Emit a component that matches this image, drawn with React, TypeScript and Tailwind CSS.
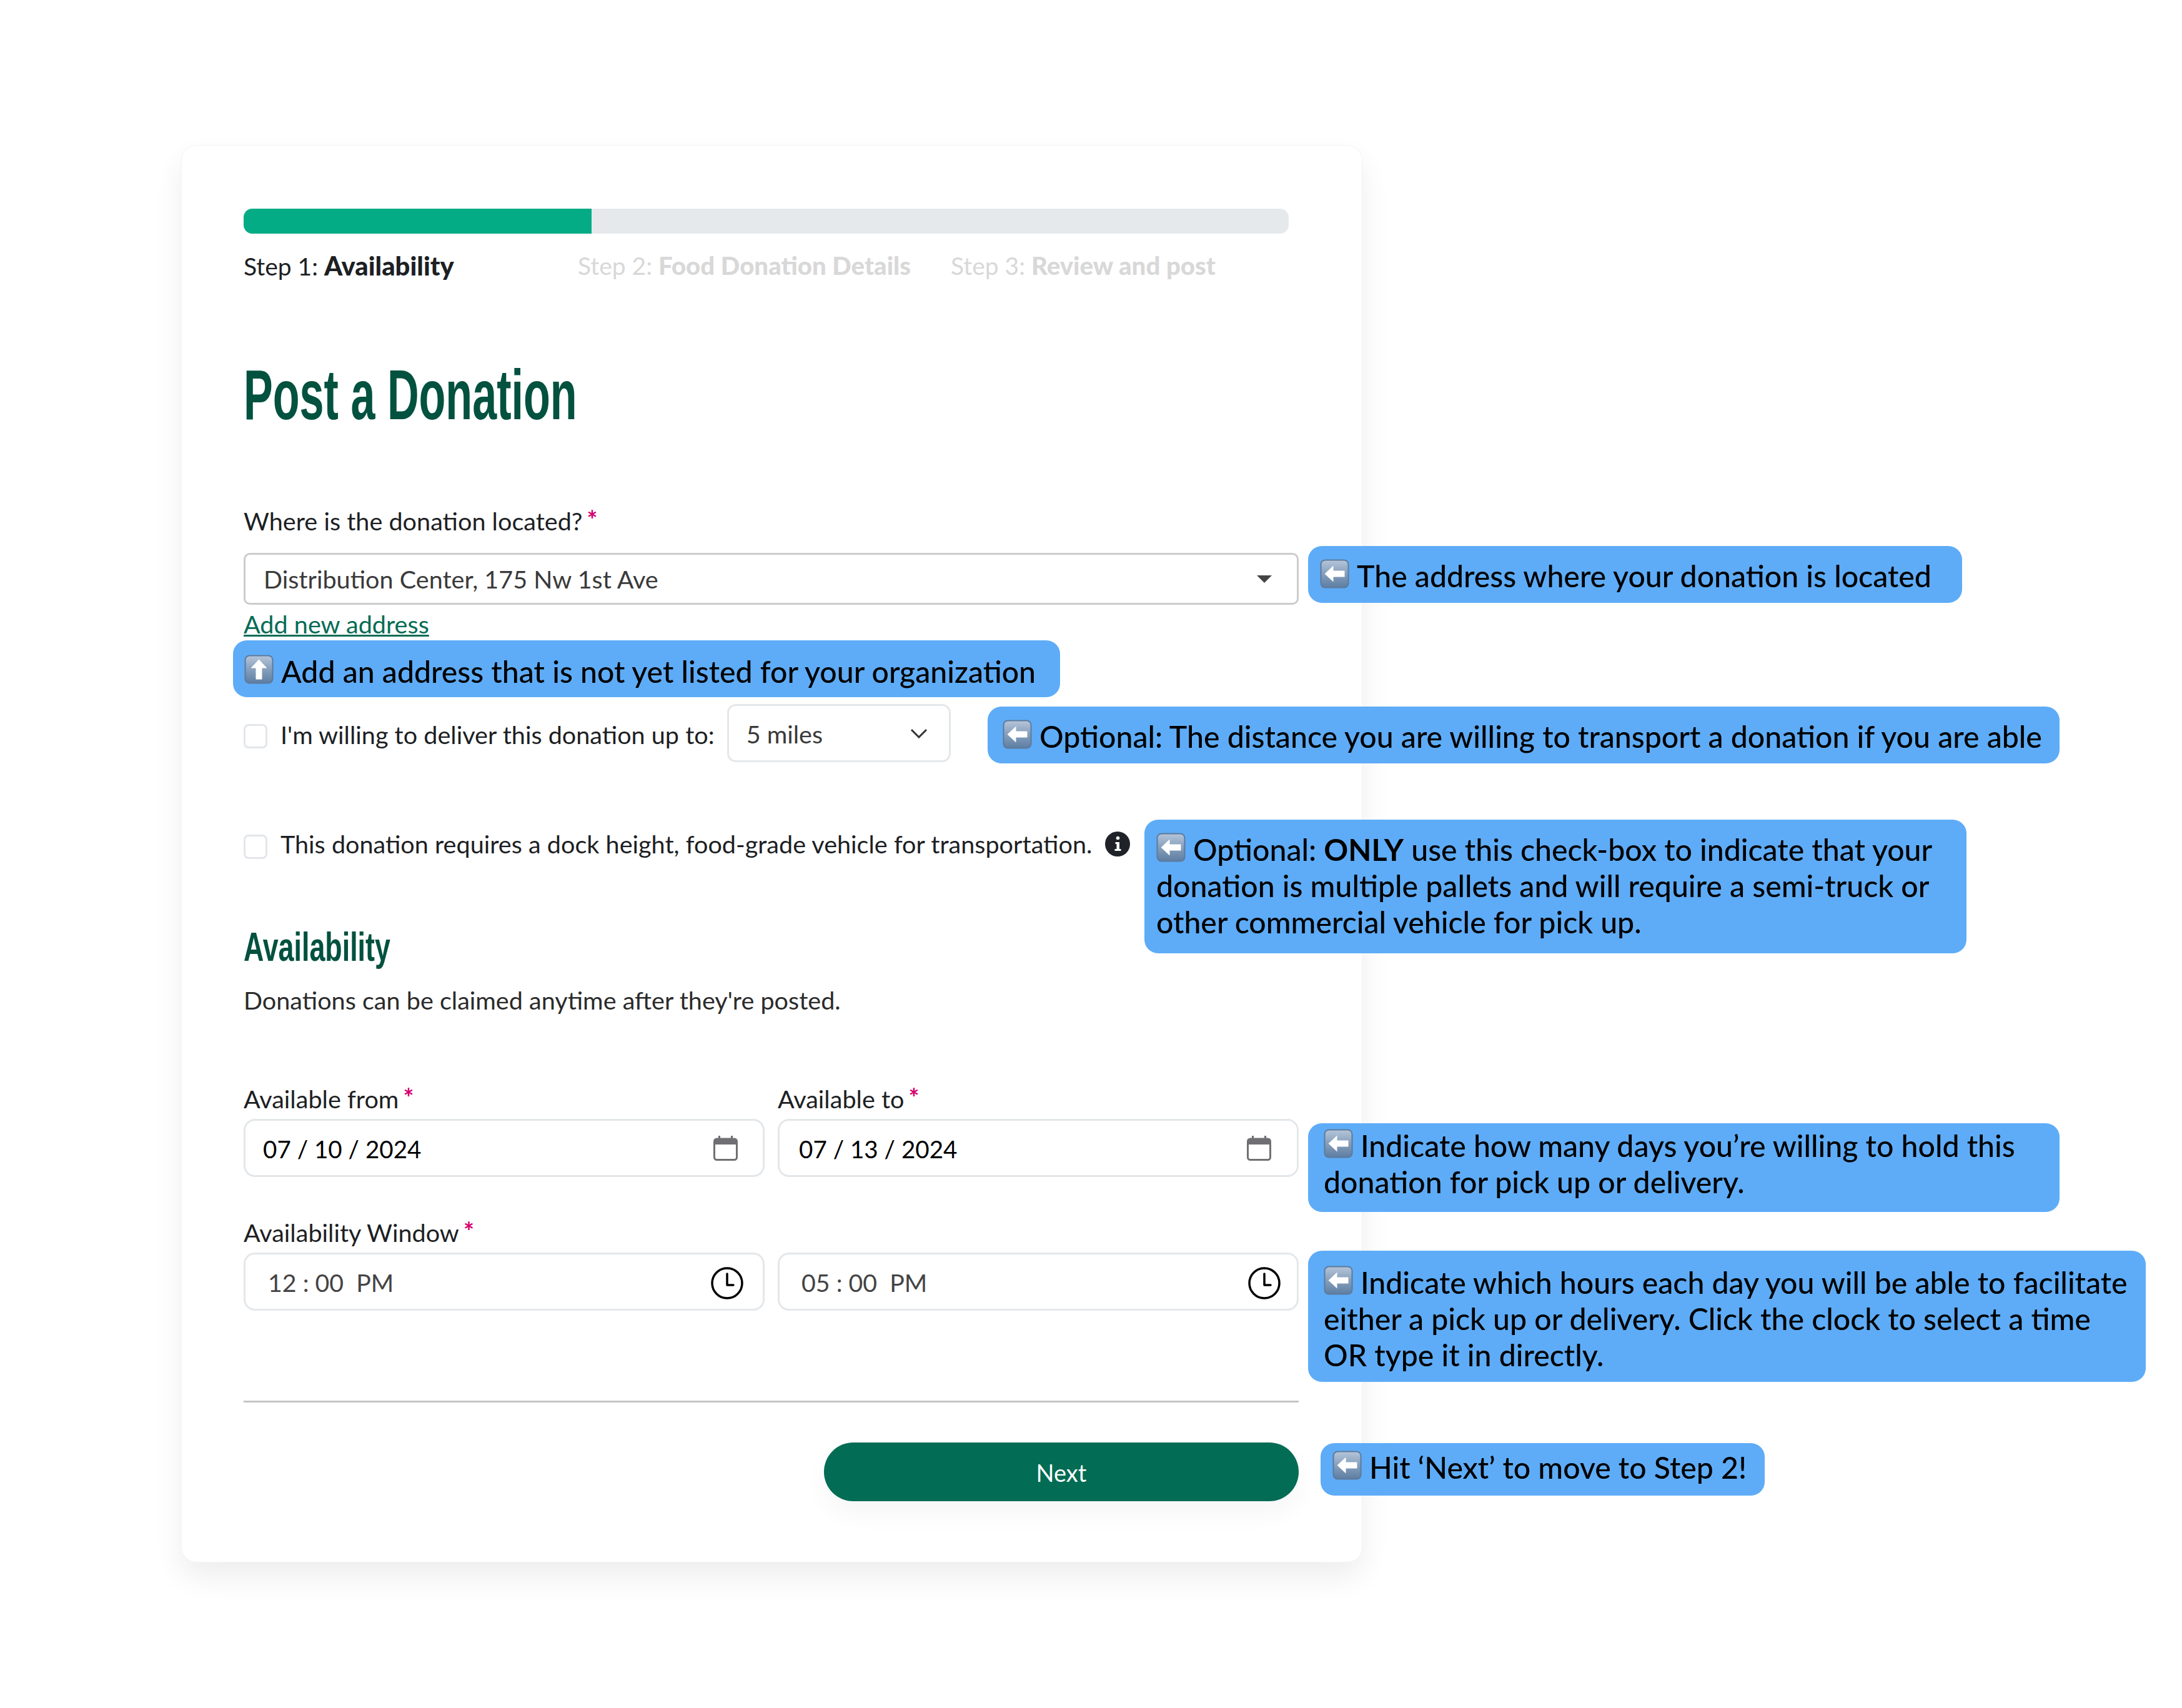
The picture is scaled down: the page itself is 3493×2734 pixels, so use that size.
import React from 'react';

const lato = "font-['Lato','Noto_Sans',sans-serif]";
const condensed = "font-['Liberation_Sans',sans-serif] font-bold origin-left";

const KeyEmoji: React.FC<{ id: string; up?: boolean }> = ({ id, up }) => (
  <svg viewBox="0 0 47 47" className="inline-block w-[47px] h-[47px] align-[-2px] mr-[12px]">
    <defs>
      <linearGradient id={id} x1="0" y1="0" x2="0" y2="1">
        <stop offset="0" stopColor="#b4c4d8" />
        <stop offset="0.45" stopColor="#8aa2bf" />
        <stop offset="1" stopColor="#5f7fa3" />
      </linearGradient>
    </defs>
    <rect x="0.5" y="0.5" width="46" height="46" rx="8" fill="#5d7a9c" />
    <rect x="2.5" y="2.5" width="42" height="42" rx="6" fill={`url(#${id})`} />
    {up ? (
      <path d="M23.5 7.5 L36.5 21.5 H28.5 V39.5 H18.5 V21.5 H10.5 Z" fill="#fff" />
    ) : (
      <path d="M7.5 23.5 L21.5 10.5 V18.5 H39.5 V28.5 H21.5 V36.5 Z" fill="#fff" />
    )}
  </svg>
);

const Callout: React.FC<{ className: string; children: React.ReactNode }> = ({ className, children }) => (
  <div className={`absolute bg-[#5eacf7] rounded-[22px] text-black text-[48.2px] leading-[58px] font-medium whitespace-nowrap ${className}`}>
    {children}
  </div>
);

const Req = () => <sup className="text-[#d6006e] text-[40px] font-bold ml-[7px] top-[-2px]">*</sup>;

const Checkbox: React.FC<{ className: string }> = ({ className }) => (
  <span className={`block w-[38px] h-[39px] shrink-0 rounded-[8px] border-[3px] border-[#e3e6ea] bg-white ${className}`} />
);

const CalendarIcon = () => (
  <svg viewBox="0 0 39 40" className="w-[39px] h-[40px] shrink-0">
    <rect x="1.5" y="5" width="36" height="33.5" rx="4" fill="#fff" stroke="#6f6f74" strokeWidth="3" />
    <path d="M1.5 9 a4 4 0 0 1 4 -4 H33.5 a4 4 0 0 1 4 4 V14 H1.5 Z" fill="#6f6f74" />
    <rect x="8" y="0" width="3" height="7" fill="#6f6f74" />
    <rect x="28" y="0" width="3" height="7" fill="#6f6f74" />
  </svg>
);

const ClockIcon = () => (
  <svg viewBox="0 0 52 52" className="w-[52px] h-[52px] shrink-0 mt-[5px]" fill="none" stroke="#000" strokeWidth="3.5">
    <circle cx="26" cy="26" r="24" />
    <path d="M26 11 V29 H36" strokeLinecap="round" strokeLinejoin="round" />
  </svg>
);

const InfoIcon = () => (
  <svg viewBox="0 0 40 40" className="w-[40px] h-[40px] shrink-0">
    <circle cx="20" cy="20" r="20" fill="#1f2329" />
    <circle cx="20.5" cy="10.5" r="2.8" fill="#fff" />
    <path d="M16.5 17 H23 V28 H25.5 V31 H15.5 V28 H18.5 V20 H16.5 Z" fill="#fff" />
  </svg>
);

const Field: React.FC<{ children: React.ReactNode; icon: React.ReactNode; className: string }> = ({ children, icon, className }) => (
  <div className={`h-[93px] flex items-center justify-between rounded-[18px] border-[3px] border-[#e4e7ea] bg-white ${className}`}>
    {children}
    {icon}
  </div>
);

const App: React.FC = () => {
  return (
    <div className={`relative w-[3493px] h-[2734px] bg-white overflow-hidden text-[39.6px] leading-[48px] text-[#1d1f24] ${lato}`}>
      <div className="pt-[232px] pl-[290px]">
        {/* Card */}
        <div className="w-[1891px] pt-[101px] pb-[97px] pl-[99px] rounded-[24px] bg-white border border-[#f3f3f6] shadow-[0_24px_48px_rgba(0,0,0,0.07)]">
          {/* Progress */}
          <div className="w-[1673px] h-[40px] bg-[#e6e9eb] rounded-[14px] overflow-hidden">
            <div className="w-[557px] h-full bg-[#04ac85]" />
          </div>
          <div className="flex mt-[27px] text-[39px]">
            <div className="w-[535px]">Step 1: <b className="font-black text-[41.8px]">Availability</b></div>
            <div className="w-[597px] text-[#d8d8d8]">Step 2: <b className="font-black text-[40.2px]">Food Donation Details</b></div>
            <div className="text-[#d8d8d8]">Step 3: <b className="font-black text-[40.2px]">Review and post</b></div>
          </div>

          <h1 className={`mt-[122px] mb-[2px] text-[#03513f] text-[114px] leading-[120px] scale-x-[0.615] ${condensed}`}>
            Post a Donation
          </h1>

          <div className="w-[1689px]">
            <div className="mt-[118px]">Where is the donation located?<Req /></div>
            <div className="mt-[27px] h-[83px] flex items-center justify-between pl-[29px] pr-[40px] rounded-[10px] border-[3px] border-[#cccccc] text-[#3a3a3a]">
              <span>Distribution Center, 175 Nw 1st Ave</span>
              <span className="w-0 h-0 border-x-[12px] border-x-transparent border-t-[12px] border-t-[#444]" />
            </div>
            <a className="block mt-[7px] text-[#046c54] underline">Add new address</a>

            <div className="mt-[104px] h-[93px] flex items-center">
              <Checkbox className="mt-[10px]" />
              <span className="ml-[21px] pt-[5px]">I'm willing to deliver this donation up to:</span>
              <div className="ml-[20px] w-[358px] h-[93px] flex items-center justify-between pl-[28px] pr-[34px] rounded-[14px] border-[3px] border-[#e4e7ea] text-[#3a3a3a]">
                <span className="pt-[2px]">5 miles</span>
                <svg viewBox="0 0 28 16" className="w-[28px] h-[16px]" fill="none" stroke="#333" strokeWidth="3">
                  <path d="M2 2 L14 14 L26 2" />
                </svg>
              </div>
            </div>

            <div className="mt-[107px] h-[48px] flex items-center">
              <Checkbox className="mt-[8px]" />
              <span className="ml-[21px]">This donation requires a dock height, food-grade vehicle for transportation.</span>
              <span className="ml-[21px]"><InfoIcon /></span>
            </div>

            <h2 className={`mt-[101px] text-[#03513f] text-[64px] leading-[80px] scale-x-[0.7] ${condensed}`}>
              Availability
            </h2>
            <p className="mt-[21px] text-[#2b2b2b]">Donations can be claimed anytime after they're posted.</p>

            <div className="mt-[110px] grid grid-cols-2 gap-[21px]">
              <div>Available from<Req /></div>
              <div>Available to<Req /></div>
            </div>
            <div className="mt-[8px] grid grid-cols-2 gap-[21px]">
              <Field className="pl-[28px] pr-[40px]" icon={<CalendarIcon />}>
                <span className="text-black text-[38.6px] pt-[3px] whitespace-pre">07 / 10 / 2024</span>
              </Field>
              <Field className="pl-[31px] pr-[41px]" icon={<CalendarIcon />}>
                <span className="text-black text-[38.6px] pt-[3px] whitespace-pre">07 / 13 / 2024</span>
              </Field>
            </div>

            <div className="mt-[65px]">Availability Window<Req /></div>
            <div className="mt-[8px] grid grid-cols-2 gap-[21px]">
              <Field className="pl-[36px] pr-[31px]" icon={<ClockIcon />}>
                <span className="text-[#444] text-[39.3px] pt-[3px] whitespace-pre">12 : 00  PM</span>
              </Field>
              <Field className="pl-[35px] pr-[26px]" icon={<ClockIcon />}>
                <span className="text-[#444] text-[39.3px] pt-[3px] whitespace-pre">05 : 00  PM</span>
              </Field>
            </div>

            <div className="mt-[144px] h-[3px] bg-[#c4c4c4]" />
            <div className="mt-[64px] flex justify-end">
              <button className="w-[760px] h-[94px] pt-[2px] rounded-full bg-[#026c54] text-white text-[38px] shadow-[0_20px_40px_rgba(0,0,0,0.04)]">
                Next
              </button>
            </div>
          </div>
        </div>
      </div>

      {/* Annotations laid over the form */}
      <Callout className="left-[2094px] top-[874px] w-[1047px] h-[91px] pl-[19px] pt-[18px]">
        <KeyEmoji id="k1" />The address where your donation is located
      </Callout>
      <Callout className="left-[373px] top-[1025px] w-[1324px] h-[91px] pl-[18px] pt-[20px]">
        <KeyEmoji id="k2" up />Add an address that is not yet listed for your organization
      </Callout>
      <Callout className="left-[1581px] top-[1131px] w-[1716px] h-[91px] pl-[24px] pt-[18px]">
        <KeyEmoji id="k3" />Optional: The distance you are willing to transport a donation if you are able
      </Callout>
      <Callout className="left-[1832px] top-[1312px] w-[1316px] h-[214px] pl-[19px] pt-[18px]">
        <KeyEmoji id="k4" />Optional: <b className="font-bold">ONLY</b> use this check-box to indicate that your<br />
        donation is multiple pallets and will require a semi-truck or<br />
        other commercial vehicle for pick up.
      </Callout>
      <Callout className="left-[2094px] top-[1798px] w-[1203px] h-[142px] pl-[25px] pt-[6px]">
        <KeyEmoji id="k5" />Indicate how many days you’re willing to hold this<br />
        donation for pick up or delivery.
      </Callout>
      <Callout className="left-[2094px] top-[2002px] w-[1341px] h-[210px] pl-[25px] pt-[21px]">
        <KeyEmoji id="k6" />Indicate which hours each day you will be able to facilitate<br />
        either a pick up or delivery. Click the clock to select a time<br />
        OR type it in directly.
      </Callout>
      <Callout className="left-[2114px] top-[2310px] w-[711px] h-[84px] pl-[19px] pt-[9px]">
        <KeyEmoji id="k7" />Hit ‘Next’ to move to Step 2!
      </Callout>
    </div>
  );
};

export default App;
